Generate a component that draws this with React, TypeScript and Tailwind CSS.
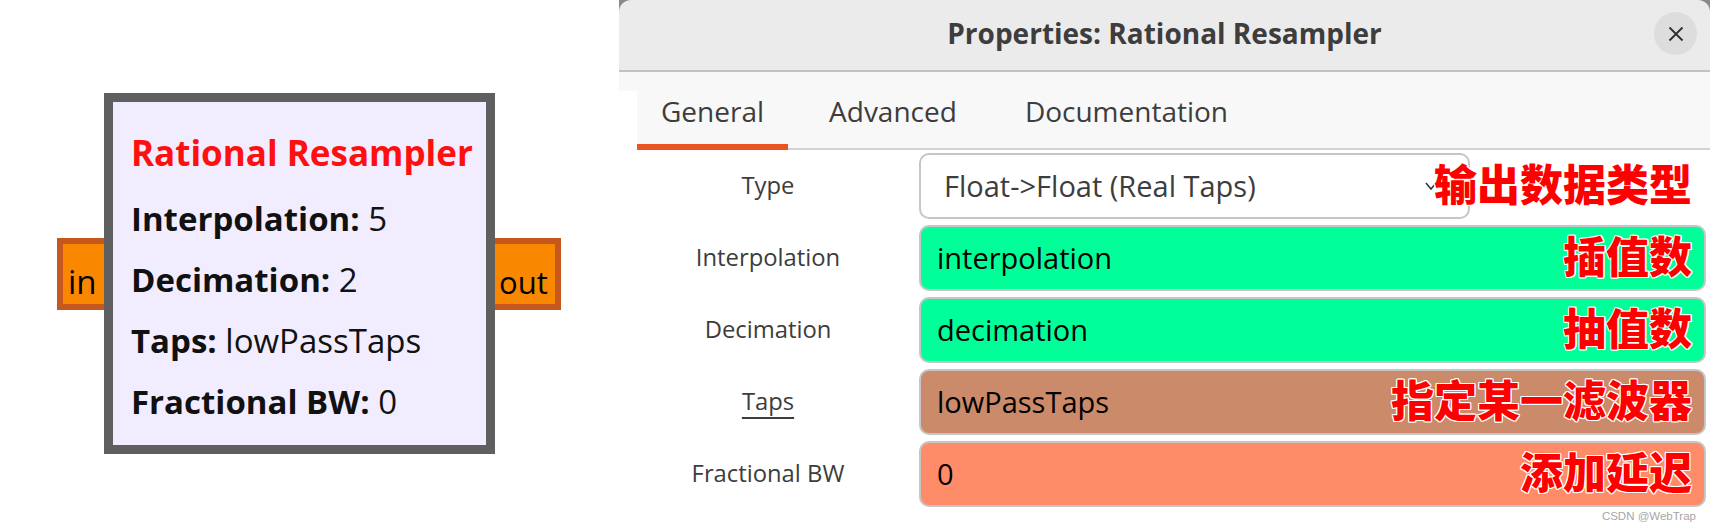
import React from "react";

function Field({ bg, text, note }: { bg: string; text: string; note: string }) {
  return (
    <div className={`flex-1 h-[66px] rounded-[10px] border-2 border-[#c6c6c6] ${bg} flex items-center pl-[16px] pr-[12px]`}>
      <span className="text-[29px] text-black">{text}</span>
      <Note text={note} />
    </div>
  );
}

function Note({ text }: { text: string }) {
  return (
    <span className="ml-auto relative pb-[8px] font-['Noto_Sans_CJK_SC',sans-serif] font-black text-[43px] leading-none text-[#ff0000] [text-shadow:1px_1px_0_#fff,-1px_-1px_0_#fff,1px_-1px_0_#fff,-1px_1px_0_#fff,0_1px_0_#fff,0_-1px_0_#fff,1px_0_0_#fff,-1px_0_0_#fff]">
      {text}
    </span>
  );
}

function Label({ children, underline }: { children: React.ReactNode; underline?: boolean }) {
  return (
    <div className="w-[262px] shrink-0 text-center text-[23.8px] text-[#3d3d3d]">
      <span className={underline ? "underline decoration-[1.5px] underline-offset-[7px]" : ""}>{children}</span>
    </div>
  );
}

export default function App() {
  return (
    <div className="w-[1713px] h-[532px] bg-white flex overflow-hidden font-['Open_Sans',sans-serif]">
      {/* Left: flowgraph block */}
      <div className="w-[619px] shrink-0 pt-[93px] pl-[57px]">
        <div className="flex items-start">
          <div className="mt-[145px] w-[53px] h-[72px] shrink-0 border-[6px] border-[#c5581c] bg-[#f98800] pl-[5px] pt-[22px] text-[33px] leading-[32px] text-black">
            in
          </div>
          <div className="relative z-10 -ml-[6px] w-[391px] h-[361px] shrink-0 border-[9px] border-[#5f5f5f] bg-[#f1edff] pl-[18px] pt-[31px]">
            <div className="text-[35px] leading-[40px] font-bold text-[#ff0f0f] whitespace-nowrap">Rational Resampler</div>
            <div className="mt-[28px] flex flex-col gap-[25px] text-[33px] leading-[36px] text-[#111] whitespace-nowrap">
              <div><span className="font-bold">Interpolation:</span> 5</div>
              <div><span className="font-bold">Decimation:</span> 2</div>
              <div><span className="font-bold">Taps:</span> lowPassTaps</div>
              <div><span className="font-bold">Fractional BW:</span> 0</div>
            </div>
          </div>
          <div className="-ml-[6px] mt-[145px] w-[72px] h-[72px] shrink-0 border-[6px] border-[#c5581c] bg-[#f98800] pl-[4px] pt-[22px] text-[31px] leading-[32px] text-black">
            out
          </div>
        </div>
      </div>

      {/* Right: properties dialog */}
      <div className="w-[1091px] shrink-0 flex flex-col">
        <div className="bg-[#8a8a8a]">
          <div className="relative h-[72px] rounded-t-[12px] bg-[#ebebeb] border-b-2 border-[#c2c2c2] flex items-center justify-center pb-[5px]">
            <span className="text-[28px] font-bold text-[#3d3d3d]">Properties: Rational Resampler</span>
            <div className="absolute right-[13px] top-[12px] w-[43px] h-[43px] rounded-full bg-[#dddddd] flex items-center justify-center">
              <svg width="16" height="16" viewBox="0 0 16 16">
                <path d="M1.5 1.5 L14.5 14.5 M14.5 1.5 L1.5 14.5" stroke="#2e2e2e" strokeWidth="1.8" fill="none" />
              </svg>
            </div>
          </div>
        </div>
        <div className="flex flex-1 bg-white">
          <div className="w-[18px] shrink-0">
            <div className="h-[19px] bg-[#f8f8f8]" />
          </div>
          <div className="flex-1 flex flex-col">
            <div className="h-[78px] bg-[#f8f8f8] border-b-2 border-[#d3d3d3] flex text-[28px] text-[#3d3d3d]">
              <div className="h-[78px] shrink-0 px-[24px] pt-[6px] flex items-center border-b-[6px] border-[#e95420]">General</div>
              <div className="h-[78px] shrink-0 ml-[17px] px-[24px] pt-[6px] flex items-center border-b-[6px] border-transparent">Advanced</div>
              <div className="h-[78px] shrink-0 ml-[20px] px-[24px] pt-[6px] flex items-center border-b-[6px] border-transparent">Documentation</div>
            </div>
            <div className="pt-[3px] pr-[4px] flex flex-col gap-[6px]">
              <div className="h-[66px] flex items-center gap-[20px]">
                <Label>Type</Label>
                <div className="flex-1 flex items-center pr-[14px]">
                  <div className="w-[551px] shrink-0 -mr-[100px] h-[66px] rounded-[10px] border-2 border-[#c6c6c6] bg-white flex items-center pl-[23px] pr-[31px] text-[29px] text-[#3d3d3d]">
                    <span>Float-&gt;Float (Real Taps)</span>
                    <svg className="ml-auto" width="12" height="10" viewBox="0 0 12 10">
                      <path d="M1 2 L6 8 L11 2" stroke="#333" strokeWidth="1.5" fill="none" />
                    </svg>
                  </div>
                  <Note text="输出数据类型" />
                </div>
              </div>
              <div className="h-[66px] flex items-center gap-[20px]">
                <Label>Interpolation</Label>
                <Field bg="bg-[#00ff99]" text="interpolation" note="插值数" />
              </div>
              <div className="h-[66px] flex items-center gap-[20px]">
                <Label>Decimation</Label>
                <Field bg="bg-[#00ff99]" text="decimation" note="抽值数" />
              </div>
              <div className="h-[66px] flex items-center gap-[20px]">
                <Label underline>Taps</Label>
                <Field bg="bg-[#cb8b6a]" text="lowPassTaps" note="指定某一滤波器" />
              </div>
              <div className="h-[66px] flex items-center gap-[20px]">
                <Label>Fractional BW</Label>
                <Field bg="bg-[#ff8c69]" text="0" note="添加延迟" />
              </div>
            </div>
            <div className="text-right pr-[14px] pt-[1px] text-[11.5px] leading-[16px] text-[#a6a6a6] font-['Liberation_Sans',Arial,sans-serif]">
              CSDN @WebTrap
            </div>
          </div>
        </div>
      </div>
    </div>
  );
}
